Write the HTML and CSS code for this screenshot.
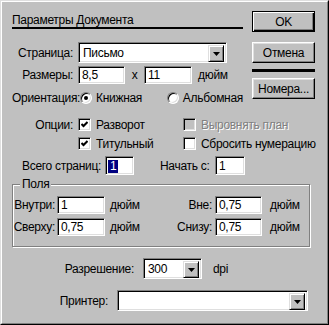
FILE: index.html
```html
<!DOCTYPE html>
<html>
<head>
<title>Параметры Документа</title>
<link rel="stylesheet" href="styles.css">
</head>
<body>
  <div class="dialog">
    <div class="inner">
      <div class="top">
        <div class="main">
          <div class="title">Параметры Документа</div>

          <div class="row row-page">
            <span class="lbl">Страница:</span>
            <div class="combo combo-page">
              <span class="val">Письмо</span>
              <span class="arrow"><svg width="7" height="4" viewBox="0 0 7 4"><polygon points="0,0 7,0 3.5,4" fill="#000"/></svg></span>
            </div>
          </div>

          <div class="row row-size">
            <span class="lbl">Размеры:</span>
            <span class="field field-size">8,5</span>
            <span class="times">x</span>
            <span class="field field-size2">11</span>
            <span class="unit">дюйм</span>
          </div>

          <div class="row row-orient">
            <span class="lbl lbl-orient">Ориентация:</span>
            <span class="option option-first"><span class="radio on"></span>Книжная</span>
            <span class="option"><span class="radio"></span>Альбомная</span>
          </div>
        </div>

        <div class="buttons">
          <button class="btn btn-default">OK</button>
          <button class="btn">Отмена</button>
          <div class="sep"></div>
          <button class="btn">Номера...</button>
        </div>
      </div>

      <div class="options">
        <span class="lbl">Опции:</span>
        <div class="checks">
          <span class="option"><span class="check"><svg width="7" height="7" viewBox="0 0 7 7"><path d="M0.5 3 L2.5 5 L6.5 1" stroke="#000" stroke-width="2" fill="none"/></svg></span>Разворот</span>
          <span class="option disabled"><span class="check"></span>Выровнять план</span>
          <span class="option"><span class="check"><svg width="7" height="7" viewBox="0 0 7 7"><path d="M0.5 3 L2.5 5 L6.5 1" stroke="#000" stroke-width="2" fill="none"/></svg></span>Титульный</span>
          <span class="option"><span class="check"></span>Сбросить нумерацию</span>
        </div>
      </div>

      <div class="row row-total">
        <span class="lbl lbl-total">Всего страниц:</span>
        <span class="field field-total"><span class="selected">1</span></span>
        <span class="lbl-start">Начать с:</span>
        <span class="field field-start">1</span>
      </div>

      <div class="group">
        <span class="group-title">Поля</span>
        <div class="row margin-row">
          <span class="lbl-a">Внутри:</span>
          <span class="field field-margin">1</span>
          <span class="unit-a">дюйм</span>
          <span class="lbl-b">Вне:</span>
          <span class="field field-margin2">0,75</span>
          <span class="unit-b">дюйм</span>
        </div>
        <div class="row margin-row second">
          <span class="lbl-a">Сверху:</span>
          <span class="field field-margin">0,75</span>
          <span class="unit-a">дюйм</span>
          <span class="lbl-b">Снизу:</span>
          <span class="field field-margin2">0,75</span>
          <span class="unit-b">дюйм</span>
        </div>
      </div>

      <div class="row row-res">
        <span class="lbl lbl-res">Разрешение:</span>
        <div class="combo combo-res">
          <span class="val">300</span>
          <span class="arrow"><svg width="7" height="4" viewBox="0 0 7 4"><polygon points="0,0 7,0 3.5,4" fill="#000"/></svg></span>
        </div>
        <span class="dpi">dpi</span>
      </div>

      <div class="row row-printer">
        <span class="lbl lbl-printer">Принтер:</span>
        <div class="combo combo-printer">
          <span class="val"></span>
          <span class="arrow"><svg width="7" height="4" viewBox="0 0 7 4"><polygon points="0,0 7,0 3.5,4" fill="#000"/></svg></span>
        </div>
      </div>
    </div>
  </div>
</body>
</html>
```

FILE: styles.css
```css
body {
  margin: 0;
  background: #c0c0c0;
  font-family: 'Liberation Sans', Arial, sans-serif;
  font-size: 12px;
  letter-spacing: -0.3px;
  line-height: 14px;
  color: #000;
}

/* window frame */
.dialog {
  width: 329px;
  height: 325px;
  box-sizing: border-box;
  border: 1px solid;
  border-color: #dfdfdf #000 #000 #dfdfdf;
}

.inner {
  height: 100%;
  box-sizing: border-box;
  border: 1px solid;
  border-color: #fff #808080 #808080 #fff;
  padding: 10px 0 0 10px;
}

.top {
  display: flex;
}

.main {
  width: 231px;
}

.title {
  margin-top: 1px;
  height: 14px;
  border-bottom: 2px solid #000;
}

.row {
  display: flex;
  align-items: center;
}

.lbl {
  width: 61px;
  margin-right: 5px;
  text-align: right;
  white-space: nowrap;
}

/* sunken text field */
.field {
  box-sizing: border-box;
  height: 18px;
  background: #fff;
  border: 1px solid;
  border-color: #808080 #fff #fff #808080;
  box-shadow: inset 1px 1px 0 #000, inset -1px -1px 0 #dfdfdf;
  padding: 1px 0 0 3px;
  line-height: 14px;
}

/* combo box */
.combo {
  box-sizing: border-box;
  height: 21px;
  background: #fff;
  border: 1px solid;
  border-color: #808080 #fff #fff #808080;
  box-shadow: inset 1px 1px 0 #000, inset -1px -1px 0 #dfdfdf;
  padding: 2px;
  display: flex;
}

.combo .val {
  flex: 1;
  padding: 1px 0 0 2px;
}

.arrow {
  box-sizing: border-box;
  width: 16px;
  height: 17px;
  border: 1px solid;
  border-color: #dfdfdf #000 #000 #dfdfdf;
  box-shadow: inset 1px 1px 0 #fff, inset -1px -1px 0 #808080;
  background: #c0c0c0;
  display: flex;
  align-items: center;
  justify-content: center;
}

.arrow svg {
  display: block;
}

.row-page {
  margin-top: 13px;
}

.combo-page {
  width: 149px;
}

.row-size {
  margin-top: 3px;
}

.field-size {
  width: 47px;
}

.times {
  width: 19px;
  text-align: center;
}

.field-size2 {
  width: 48px;
}

.unit {
  margin-left: 6px;
}

.row-orient {
  margin-top: 6px;
  height: 16px;
}

.lbl-orient {
  width: 66px;
  margin-right: 0;
}

.option {
  display: flex;
  align-items: center;
  white-space: nowrap;
}

.row-orient .option {
  margin-left: 2px;
}

.row-orient .option-first {
  width: 85px;
}

.radio {
  position: relative;
  box-sizing: border-box;
  width: 12px;
  height: 12px;
  border-radius: 50%;
  border: 1px solid;
  border-color: #808080 #fff #fff #808080;
  box-shadow: inset 1px 1px 0 #000, inset -1px -1px 0 #dfdfdf;
  background: #fff;
  margin-right: 4px;
}

.radio.on::after {
  content: '';
  position: absolute;
  left: 3px;
  top: 3px;
  width: 4px;
  height: 4px;
  border-radius: 50%;
  background: #000;
}

.check {
  box-sizing: border-box;
  width: 13px;
  height: 13px;
  border: 1px solid;
  border-color: #808080 #fff #fff #808080;
  box-shadow: inset 1px 1px 0 #000, inset -1px -1px 0 #dfdfdf;
  background: #fff;
  margin-right: 5px;
  display: flex;
  align-items: center;
  justify-content: center;
}

.check svg {
  display: block;
}

.disabled {
  color: #808080;
  text-shadow: 1px 1px 0 #fff;
}

.disabled .check {
  background: #c0c0c0;
}

/* buttons column */
.buttons {
  margin-left: 9px;
  margin-top: -1px;
  width: 63px;
  display: flex;
  flex-direction: column;
}

.btn {
  box-sizing: border-box;
  height: 21px;
  margin: 10px 0 0;
  padding: 0;
  font: inherit;
  letter-spacing: inherit;
  color: #000;
  background: #c0c0c0;
  border: 1px solid;
  border-color: #fff #000 #000 #fff;
  box-shadow: inset -1px -1px 0 #808080, inset 1px 1px 0 #dfdfdf;
}

.btn-default {
  margin-top: 0;
  border: 1px solid #000;
  box-shadow: inset 1px 1px 0 #fff, inset -1px -1px 0 #000, inset -2px -2px 0 #808080;
}

.sep {
  height: 3px;
  background: #000;
  margin-top: 6px;
  margin-bottom: -4px;
}

/* options */
.options {
  display: flex;
  margin-top: 12px;
}

.checks {
  display: grid;
  grid-template-columns: 105px auto;
  row-gap: 6px;
}

.checks .option {
  height: 13px;
}

.row-total {
  margin-top: 6px;
  height: 19px;
}

.lbl-total {
  width: 89px;
  margin-right: 4px;
}

.field-total {
  width: 29px;
  height: 19px;
  padding: 2px 0 0 2px;
}

.selected {
  display: inline-block;
  background: #000080;
  color: #fff;
  padding: 0 2px;
  line-height: 13px;
}

.lbl-start {
  margin-left: 26px;
  width: 55px;
  white-space: nowrap;
}

.field-start {
  width: 30px;
  height: 19px;
  padding-top: 2px;
}

/* group box */
.group {
  position: relative;
  margin-top: 9px;
  width: 298px;
  height: 63px;
  box-sizing: border-box;
  border: 1px solid #808080;
  box-shadow: inset 1px 1px 0 #fff, 1px 1px 0 #fff;
  padding-top: 11px;
}

.group-title {
  position: absolute;
  left: 7px;
  top: -8px;
  padding: 0 2px;
  background: #c0c0c0;
}

.margin-row.second {
  margin-top: 4px;
}

.lbl-a {
  width: 42px;
  margin-right: 2px;
  text-align: right;
}

.field-margin {
  width: 48px;
}

.field-margin2 {
  width: 47px;
}

.unit-a {
  margin-left: 5px;
  width: 50px;
}

.lbl-b {
  width: 52px;
  margin-right: 3px;
  text-align: right;
}

.unit-b {
  margin-left: 8px;
}

.row-res {
  margin-top: 11px;
}

.lbl-res {
  width: 122px;
  margin-right: 9px;
}

.combo-res {
  width: 59px;
}

.dpi {
  margin-left: 11px;
}

.row-printer {
  margin-top: 11px;
}

.lbl-printer {
  width: 96px;
  margin-right: 9px;
}

.combo-printer {
  width: 191px;
}
```
